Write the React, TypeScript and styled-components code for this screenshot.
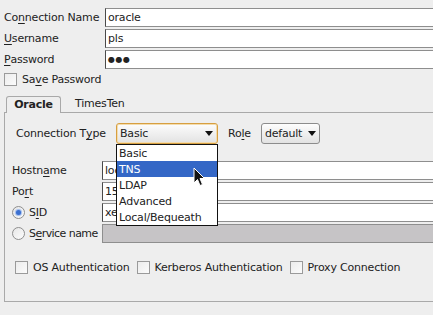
import React from 'react';
import styled, { createGlobalStyle } from 'styled-components';

const GlobalStyle = createGlobalStyle`
  html, body {
    margin: 0;
    padding: 0;
    background: #eeeeee;
    overflow: hidden;
  }
  body {
    font-family: "DejaVu Sans", "Liberation Sans", sans-serif;
    font-size: 11px;
    letter-spacing: -0.2px;
    color: #222;
  }
`;

const Page = styled.div`
  width: 470px;
  height: 315px;
  box-sizing: border-box;
  padding: 8px 0 0 4px;
`;

const TopForm = styled.div`
  display: grid;
  grid-template-columns: 101px 1fr;
  row-gap: 2px;
`;

const Label = styled.span<{ $width?: number; $tight?: boolean }>`
  display: flex;
  align-items: center;
  height: 19px;
  white-space: nowrap;
  width: ${(p) => (p.$width ? `${p.$width}px` : 'auto')};
  letter-spacing: ${(p) => (p.$tight ? '-0.55px' : 'inherit')};
  flex-shrink: 0;
`;

const Mn = styled.span`
  text-decoration: underline;
  text-underline-offset: 2px;
`;

const TextField = styled.div<{ $disabled?: boolean }>`
  flex: 1;
  height: 19px;
  box-sizing: border-box;
  background: ${(p) => (p.$disabled ? '#c6c4c6' : '#ffffff')};
  border: 1px solid #8e8e8e;
  border-left-color: ${(p) => (p.$disabled ? '#8e8e8e' : '#4a4a4a')};
  padding: 0 2px;
  display: flex;
  align-items: center;
  white-space: nowrap;
  overflow: hidden;
`;

const Dots = styled.span`
  font-size: 8px;
  letter-spacing: 0.5px;
`;

const CheckRow = styled.div`
  display: flex;
  align-items: center;
  gap: 5px;
  margin-top: 4px;
  height: 13px;
`;

const CheckBox = styled.span`
  width: 13px;
  height: 13px;
  box-sizing: border-box;
  border: 1px solid #9a9a9a;
  background: linear-gradient(135deg, #ececec, #fbfbfb);
  flex-shrink: 0;
`;

const TabStrip = styled.div`
  display: flex;
  align-items: flex-end;
  margin: 10px 0 0 2px;
  height: 16px;
`;

const Tab = styled.div<{ $active?: boolean }>`
  box-sizing: border-box;
  height: ${(p) => (p.$active ? '17px' : '16px')};
  margin-bottom: ${(p) => (p.$active ? '-1px' : '0')};
  padding: ${(p) => (p.$active ? '0 8px 2px' : '0 13px 2px 14px')};
  width: ${(p) => (p.$active ? '55px' : 'auto')};
  display: flex;
  align-items: center;
  justify-content: center;
  font-weight: ${(p) => (p.$active ? 'bold' : 'normal')};
  background: ${(p) => (p.$active ? '#eeeeee' : 'transparent')};
  border: ${(p) => (p.$active ? '1px solid #a9a9a9' : 'none')};
  border-bottom: none;
  border-radius: 3px 3px 0 0;
  position: relative;
  z-index: 1;
`;

const Panel = styled.div`
  border: 1px solid #a9a9a9;
  height: 190px;
  box-sizing: border-box;
  padding: 10px 0 0 0;
`;

const ConnRow = styled.div`
  display: flex;
  align-items: center;
  padding-left: 11px;
  height: 21px;
`;

const ComboWrap = styled.div`
  position: relative;
`;

const Combo = styled.div<{ $focused?: boolean; $width: number }>`
  width: ${(p) => p.$width}px;
  height: 21px;
  box-sizing: border-box;
  border: 1px solid ${(p) => (p.$focused ? '#d79f40' : '#8c8c8c')};
  box-shadow: ${(p) => (p.$focused ? 'inset 0 0 0 1px #f3dcae' : 'none')};
  border-radius: 3px;
  background: linear-gradient(#fdfdfd, #e2e2e2);
  display: flex;
  align-items: center;
  justify-content: space-between;
  padding: 0 ${(p) => (p.$focused ? '4px' : '3px')} 0 3px;
`;

const Arrow = styled.span`
  width: 0;
  height: 0;
  border-left: 4px solid transparent;
  border-right: 4px solid transparent;
  border-top: 5px solid #111;
`;

const RoleLabel = styled.span`
  margin: 0 10px 0 10px;
  white-space: nowrap;
`;

const Popup = styled.div`
  position: absolute;
  top: 21px;
  left: 0;
  width: 102px;
  box-sizing: border-box;
  border: 1px solid #111;
  background: #ffffff;
  z-index: 5;
`;

const Item = styled.div<{ $selected?: boolean }>`
  height: 16px;
  display: flex;
  align-items: center;
  padding-left: 2px;
  background: ${(p) => (p.$selected ? '#3467c6' : 'transparent')};
  color: ${(p) => (p.$selected ? '#ffffff' : '#222')};
  white-space: nowrap;
`;

const Cursor = styled.svg`
  position: absolute;
  left: 77px;
  top: 44px;
  z-index: 6;
`;

const Fields = styled.div`
  display: flex;
  flex-direction: column;
  gap: 2px;
  margin-top: 17px;
  padding-left: 7px;
`;

const FieldRow = styled.div`
  display: flex;
  align-items: center;
`;

const Radio = styled.span<{ $checked?: boolean }>`
  width: 13px;
  height: 13px;
  box-sizing: border-box;
  border-radius: 50%;
  border: 1px solid #8e8e8e;
  background: linear-gradient(135deg, #e6e6e6, #fcfcfc);
  display: flex;
  align-items: center;
  justify-content: center;
  margin-right: 4px;
  flex-shrink: 0;
  &::after {
    content: '';
    display: ${(p) => (p.$checked ? 'block' : 'none')};
    width: 5px;
    height: 5px;
    border-radius: 50%;
    background: #3a6fd0;
    box-shadow: 0 0 1px 1px #9bb8ec;
  }
`;

const AuthRow = styled.div`
  display: flex;
  align-items: center;
  gap: 7px;
  margin-top: 18px;
  padding-left: 10px;
`;

const AuthItem = styled.div`
  display: flex;
  align-items: center;
  gap: 5px;
  white-space: nowrap;
`;

const connectionTypes = ['Basic', 'TNS', 'LDAP', 'Advanced', 'Local/Bequeath'];

export default function App() {
  return (
    <Page>
      <GlobalStyle />
      <TopForm>
        <Label>
          Co<Mn>n</Mn>nection Name
        </Label>
        <TextField>oracle</TextField>
        <Label>
          <Mn>U</Mn>sername
        </Label>
        <TextField>pls</TextField>
        <Label>
          <Mn>P</Mn>assword
        </Label>
        <TextField>
          <Dots>●●●</Dots>
        </TextField>
      </TopForm>

      <CheckRow>
        <CheckBox />
        <span>
          Sa<Mn>v</Mn>e Password
        </span>
      </CheckRow>

      <TabStrip>
        <Tab $active>Oracle</Tab>
        <Tab>TimesTen</Tab>
      </TabStrip>

      <Panel>
        <ConnRow>
          <Label $width={100}>
            Connection T<Mn>y</Mn>pe
          </Label>
          <ComboWrap>
            <Combo $focused $width={102}>
              <span>Basic</span>
              <Arrow />
            </Combo>
            <Popup>
              {connectionTypes.map((t) => (
                <Item key={t} $selected={t === 'TNS'}>
                  {t}
                </Item>
              ))}
            </Popup>
            <Cursor width="13" height="21" viewBox="0 0 13 21">
              <path
                d="M1 1 L1 16 L4.5 12.5 L7 18.5 L9.5 17.5 L7 11.5 L11.5 11.5 Z"
                fill="#111"
                stroke="#fff"
                strokeWidth="1"
                strokeLinejoin="round"
              />
            </Cursor>
          </ComboWrap>
          <RoleLabel>
            Ro<Mn>l</Mn>e
          </RoleLabel>
          <Combo $width={59}>
            <span>default</span>
            <Arrow />
          </Combo>
        </ConnRow>

        <Fields>
          <FieldRow>
            <Label $width={90}>
              Hostn<Mn>a</Mn>me
            </Label>
            <TextField>localhost</TextField>
          </FieldRow>
          <FieldRow>
            <Label $width={90}>
              Po<Mn>r</Mn>t
            </Label>
            <TextField>1521</TextField>
          </FieldRow>
          <FieldRow>
            <Label $width={90}>
              <Radio $checked />
              S<Mn>I</Mn>D
            </Label>
            <TextField>xe</TextField>
          </FieldRow>
          <FieldRow>
            <Label $width={90} $tight>
              <Radio />
              S<Mn>e</Mn>rvice name
            </Label>
            <TextField $disabled />
          </FieldRow>
        </Fields>

        <AuthRow>
          <AuthItem>
            <CheckBox />
            OS Authentication
          </AuthItem>
          <AuthItem>
            <CheckBox />
            Kerberos Authentication
          </AuthItem>
          <AuthItem>
            <CheckBox />
            Proxy Connection
          </AuthItem>
        </AuthRow>
      </Panel>
    </Page>
  );
}
